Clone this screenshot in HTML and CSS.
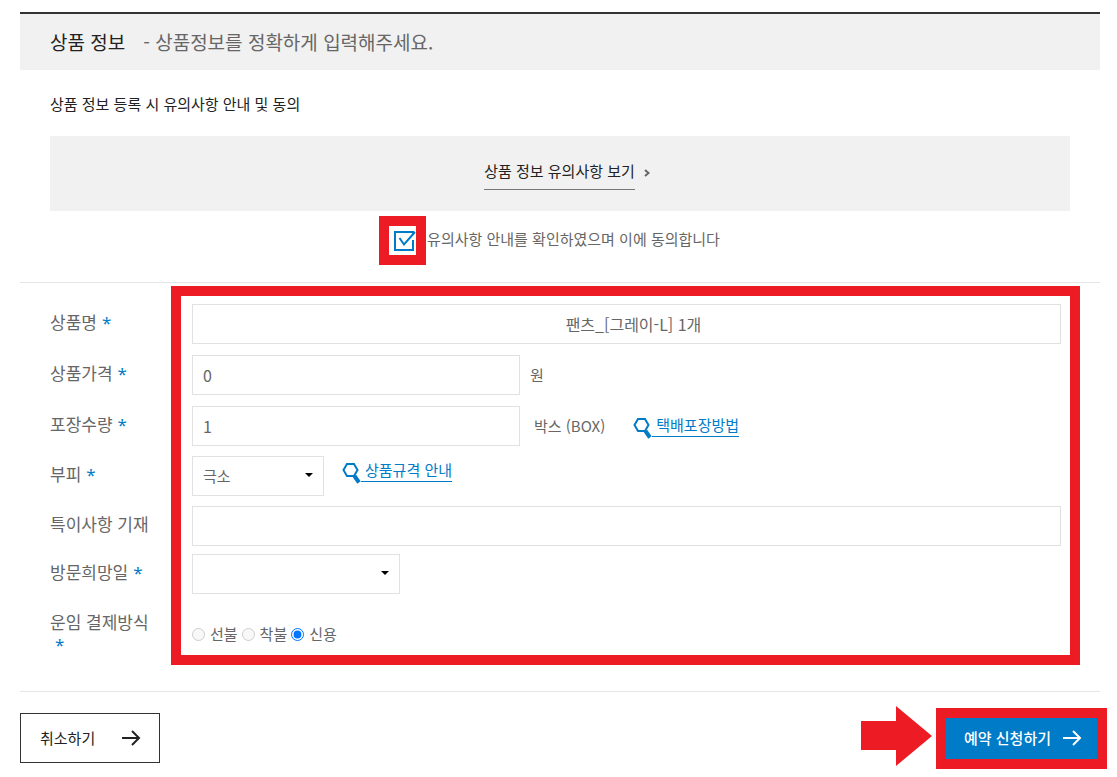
FILE: index.html
```html
<!DOCTYPE html>
<html lang="ko">
<head>
<meta charset="utf-8">
<meta name="viewport" content="width=device-width, initial-scale=1">
<title>상품 정보</title>
<link rel="stylesheet" href="styles.css">
</head>
<body>
<form class="page">
  <header class="section-head">
    <h2 class="section-title">상품 정보</h2>
    <p class="section-note">- 상품정보를 정확하게 입력해주세요.</p>
  </header>

  <section class="notice">
    <p class="notice-title">상품 정보 등록 시 유의사항 안내 및 동의</p>
    <div class="notice-box">
      <a class="notice-link" href="#"><span class="notice-text">상품 정보 유의사항 보기</span>
        <svg class="chevron" viewBox="0 0 6 8"><path d="M1 1 L4.5 4 L1 7"/></svg></a>
    </div>
    <div class="agree">
      <span class="check-wrap">
        <input class="check" type="checkbox" id="agree" checked>
        <svg class="tick" viewBox="0 0 22 20"><path class="tick-gap" d="M19 3.5 V9"/><path d="M5.5 7 L10 13.5 L21 1"/></svg>
        <span class="mark mark-check"></span>
      </span>
      <label for="agree">유의사항 안내를 확인하였으며 이에 동의합니다</label>
    </div>
  </section>

  <section class="fields">
    <label class="name" for="product">상품명<span class="req">*</span></label>
    <div class="cell"><input class="box wide centered" id="product" type="text" value="팬츠_[그레이-L] 1개"></div>

    <label class="name" for="price">상품가격<span class="req">*</span></label>
    <div class="cell"><input class="box half" id="price" type="text" value="0"><span class="unit">원</span></div>

    <label class="name" for="count">포장수량<span class="req">*</span></label>
    <div class="cell"><input class="box half" id="count" type="text" value="1"><span class="unit unit-box">박스 (BOX)</span>
      <a class="guide" href="#"><svg class="lens" viewBox="0 0 19 22"><path d="M5 2 H12 L15.5 8 L12 14 H5 L1.5 8 Z"/><path class="handle" d="M12.5 14 L17 20.5"/></svg><span class="guide-text">택배포장방법</span></a></div>

    <label class="name" for="volume">부피<span class="req">*</span></label>
    <div class="cell cell-top"><select class="box select-small" id="volume"><option>극소</option></select>
      <a class="guide guide-volume" href="#"><svg class="lens" viewBox="0 0 19 22"><path d="M5 2 H12 L15.5 8 L12 14 H5 L1.5 8 Z"/><path class="handle" d="M12.5 14 L17 20.5"/></svg><span class="guide-text">상품규격 안내</span></a></div>

    <label class="name" for="memo">특이사항 기재</label>
    <div class="cell"><input class="box wide" id="memo" type="text"></div>

    <label class="name" for="visit">방문희망일<span class="req">*</span></label>
    <div class="cell"><select class="box select-date" id="visit"><option></option></select></div>

    <span class="name" id="pay-label">운임 결제방식 <span class="req">*</span></span>
    <div class="radios" role="radiogroup" aria-labelledby="pay-label">
      <label class="radio"><input type="radio" name="pay" disabled>선불</label>
      <label class="radio"><input type="radio" name="pay" disabled>착불</label>
      <label class="radio"><input type="radio" name="pay" checked>신용</label>
    </div>
    <span class="mark mark-fields"></span>
  </section>

  <footer class="actions">
    <button class="btn btn-cancel" type="button">취소하기
      <svg class="arrow" viewBox="0 0 20 16"><path d="M1 8 H18 M11 1 L18 8 L11 15"/></svg></button>
    <div class="submit-wrap">
      <button class="btn btn-submit" type="submit">예약 신청하기
        <svg class="arrow" viewBox="0 0 20 16"><path d="M1 8 H18 M11 1 L18 8 L11 15"/></svg></button>
      <span class="mark mark-submit"></span>
      <svg class="pointer" viewBox="0 0 71 60"><path d="M0 15 H35 V0 L71 30 L35 60 V44 H0 Z"/></svg>
    </div>
  </footer>
</form>
</body>
</html>
```
FILE: styles.css
```css
* { box-sizing: border-box; }

body {
  margin: 0;
  background: #fff;
  color: #666;
  font: 400 15px/22px "Noto Sans CJK KR", sans-serif;
}

.page { padding: 12px 17px 12px 20px; }

.section-head {
  display: flex;
  align-items: center;
  gap: 18px;
  min-height: 58px;
  padding: 0 30px;
  border-top: 2px solid #333;
  background: #f1f1f1;
  font-size: 19px;
  line-height: 28px;
}
.section-title { margin: 0; color: #222; font-size: 19px; font-weight: 400; }
.section-note { margin: 0; }

.notice { padding: 22px 30px 31px; border-bottom: 1px solid #e5e5e5; }
.notice-title { margin: 0 0 20px; color: #222; line-height: 24px; }
.notice-box {
  display: flex;
  justify-content: center;
  padding: 20px 0 21px 14px;
  background: #f1f1f1;
}
.notice-link {
  display: flex;
  align-items: center;
  gap: 9px;
  color: #222;
  text-decoration: none;
}
.notice-text { padding: 4px 0 7px; border-bottom: 1px solid #777; }
.chevron { width: 6px; height: 8px; fill: none; stroke: #666; stroke-width: 2; }

.agree {
  display: flex;
  justify-content: center;
  align-items: flex-start;
  gap: 13px;
  padding: 17px 6px 0 0;
}
.check-wrap { position: relative; width: 20px; height: 20px; margin-top: 3px; }
.check {
  appearance: none;
  display: block;
  width: 20px;
  height: 20px;
  margin: 0;
  border: 2px solid #007bc7;
  background: #fff;
}
.tick {
  position: absolute;
  top: 0;
  left: 0;
  width: 22px;
  height: 20px;
  fill: none;
  stroke: #007bc7;
  stroke-width: 2;
  pointer-events: none;
}
.tick-gap { stroke: #fff; }

.mark { position: absolute; border: 10px solid #ed1c24; pointer-events: none; }
.mark-check { inset: -15px -12px -14px -15px; }
.mark-fields { inset: 3px 20px 26px 151px; }
.mark-submit { inset: -5px -7px -6px -4px; }

.fields {
  position: relative;
  display: grid;
  grid-template-columns: 142px 1fr;
  grid-template-rows: repeat(2, minmax(51px, auto)) repeat(2, minmax(50px, auto)) minmax(48px, auto) minmax(50px, auto) minmax(53px, auto);
  align-items: start;
  padding: 21px 39px 34px 30px;
  border-bottom: 1px solid #e5e5e5;
}
.name { padding: 7px 36px 0 0; font-size: 17px; line-height: 22px; }
.req {
  margin-left: 5px;
  color: #007bc7;
  font-family: "Noto Sans", sans-serif;
  line-height: 16px;
}
.cell { display: flex; align-items: center; }
.cell-top { align-items: flex-start; }

.box {
  height: 40px;
  padding: 0 10px;
  border: 1px solid #e1e1e1;
  border-radius: 0;
  background: #fff;
  color: #666;
  font: inherit;
}
.wide { width: 100%; }
.half { width: 328px; font-size: 16px; }
.centered { padding-left: 24px; font-size: 16px; text-align: center; }
.select-small, .select-date {
  appearance: none;
  background: #fff url("data:image/svg+xml,%3Csvg xmlns='http://www.w3.org/2000/svg' viewBox='0 0 8 4'%3E%3Cpath d='M0 0h8L4 4z'/%3E%3C/svg%3E") no-repeat right 10px top 16px / 8px 4px;
}
.select-small { width: 132px; }
.select-date { width: 208px; }

.unit { margin-left: 10px; }
.unit-box { margin-left: 14px; }
.guide {
  display: flex;
  align-items: flex-start;
  margin-left: 28px;
  color: #007bc7;
  text-decoration: none;
}
.guide-volume { margin: 3px 0 0 18px; }
.guide-text { padding-left: 4px; border-bottom: 1px solid #007bc7; }
.lens { width: 19px; height: 22px; margin-top: 3px; fill: none; stroke: #007bc7; stroke-width: 2; }
.handle { stroke-width: 4; }

.radios { display: flex; gap: 4px; padding-top: 19px; }
.radio { display: flex; align-items: center; gap: 5px; }
.radio input { width: 13px; height: 13px; margin: 0; }

.actions { display: flex; justify-content: space-between; padding-top: 21px; }
.btn {
  display: flex;
  align-items: center;
  justify-content: space-between;
  height: 50px;
  font: inherit;
}
.btn-cancel { width: 140px; padding: 0 18px 0 19px; border: 1px solid #333; background: #fff; color: #222; }
.btn-submit { width: 160px; padding: 0 18px 0 24px; border: 0; background: #007bc7; color: #fff; font-weight: 500; }
.arrow { width: 20px; height: 16px; fill: none; stroke: currentColor; stroke-width: 2; }
.submit-wrap { position: relative; }
.pointer { position: absolute; top: -7px; right: 168px; width: 71px; height: 60px; fill: #ed1c24; }
```
